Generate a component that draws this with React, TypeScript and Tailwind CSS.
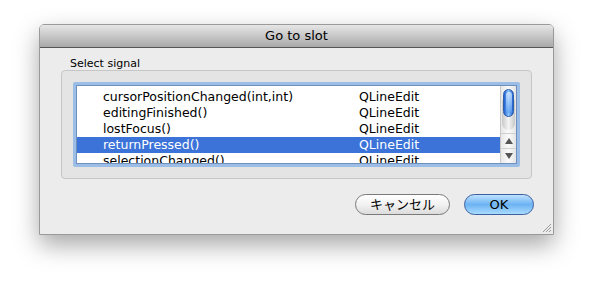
import React from "react";

const rows = [
  "cursorPositionChanged(int,int)",
  "editingFinished()",
  "lostFocus()",
  "returnPressed()",
  "selectionChanged()",
];

function ScrollBar() {
  return (
    <div className="w-[16px] h-full flex flex-col bg-gradient-to-r from-[#e8e8e8] via-[#fafafa] to-[#e4e4e4] border-l border-[#c8c8c8]">
      <div className="relative h-[47px]">
        <div className="absolute left-[1px] right-[1px] top-[14px] h-[30px] rounded-b-full bg-gradient-to-r from-[#c8c8c8] via-[#f4f4f4] to-[#c8c8c8]" />
        <div className="absolute left-[2px] right-[2px] top-[3px] h-[28px] rounded-full border border-[#2f5fa8] bg-gradient-to-r from-[#1f5fd0] via-[#8cc4ff] to-[#1f5fd0]">
          <div className="mx-auto mt-[2px] w-[6px] h-[21px] rounded-full bg-gradient-to-b from-[#e8f4ff] to-[#5aa0f0] opacity-70" />
        </div>
      </div>
      <div className="flex-1" />
      <div className="h-[15px] flex items-center justify-center border-t border-[#d0d0d0]">
        <div className="w-0 h-0 border-l-[4px] border-r-[4px] border-b-[6px] border-l-transparent border-r-transparent border-b-[#555]" />
      </div>
      <div className="h-[15px] flex items-center justify-center border-t border-[#d0d0d0]">
        <div className="w-0 h-0 border-l-[4px] border-r-[4px] border-t-[6px] border-l-transparent border-r-transparent border-t-[#555]" />
      </div>
    </div>
  );
}

export default function App() {
  return (
    <div
      className="w-[594px] h-[289px] bg-white pt-[24px] pl-[39px]"
      style={{ fontFamily: '"DejaVu Sans", "Noto Sans CJK JP", sans-serif' }}
    >
      <div className="w-[515px] h-[211px] flex flex-col rounded-t-[5px] border border-[#9a9a9a] shadow-[0_10px_24px_rgba(0,0,0,0.35)]">
        <div className="h-[23px] shrink-0 rounded-t-[4px] bg-gradient-to-b from-[#e6e6e6] to-[#a9a9a9] border-b border-[#565656] flex items-center justify-center text-[13px] text-black">
          Go to slot
        </div>
        <div className="relative flex-1 bg-[#ececec] px-[21px]">
          <div className="mt-[9px] ml-[9px] text-[11px] leading-[13px] text-black">Select signal</div>
          <div className="h-[109px] rounded-[4px] border border-[#c6c6c6] bg-[#e4e4e4] p-[11px]">
            <div className="h-[85px] rounded-[2px] p-[3px] bg-[#9cbde6]">
              <div className="h-full bg-white border border-[#6f8fbf] flex">
                <div className="flex-1 pt-[3px] overflow-hidden text-[12.5px] text-black">
                  {rows.map((r, i) => (
                    <div
                      key={r}
                      className={`h-[16px] leading-[16px] flex ${i === 3 ? "bg-[#3b73d9] text-white" : ""}`}
                    >
                      <span className="w-[282px] pl-[26px]">{r}</span>
                      <span>QLineEdit</span>
                    </div>
                  ))}
                </div>
                <ScrollBar />
              </div>
            </div>
          </div>
          <div className="mt-[15px] -mr-[2px] flex justify-end gap-[14px]">
            <button className="w-[95px] h-[21px] rounded-full border border-[#7a7a7a] bg-gradient-to-b from-white via-[#f2f2f2] to-[#dcdcdc] text-[13px] leading-[19px] text-black">
              キャンセル
            </button>
            <button className="w-[70px] h-[21px] rounded-full border border-[#3b5fa0] bg-gradient-to-b from-[#bfe2ff] via-[#6cb3f3] to-[#a9dcff] text-[13px] leading-[19px] text-black">
              OK
            </button>
          </div>
          <svg className="absolute right-[1px] bottom-[1px]" width="11" height="11" viewBox="0 0 11 11">
            <path d="M10 2 L2 10 M10 5 L5 10 M10 8 L8 10" stroke="#9a9a9a" strokeWidth="1" />
          </svg>
        </div>
      </div>
    </div>
  );
}
